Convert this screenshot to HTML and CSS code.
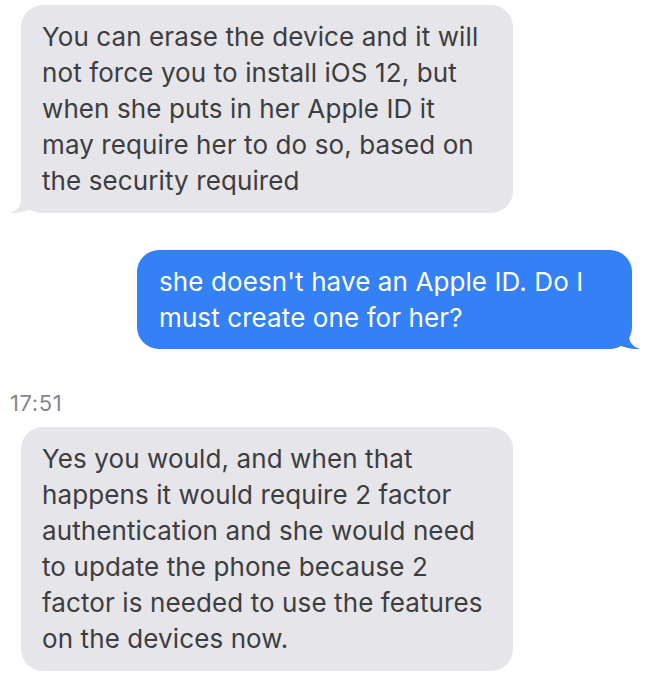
FILE: index.html
```html
<!DOCTYPE html>
<html lang="en">
<head>
  <meta charset="UTF-8">
  <meta name="viewport" content="width=device-width, initial-scale=1.0">
  <title>Messages</title>
  <link rel="stylesheet" href="styles.css">
</head>
<body>
  <div class="thread">
    <div class="row in">
      <div class="bubble grey">
        <svg class="tail tail-left" width="40" height="30" viewBox="0 0 40 30"><path d="M11 0 L11 17 C11 23 7 28 0 30 C7 30.5 14 29 20 26.5 C25 29.5 30 30 40 30 L40 0 Z"/></svg>
        <span class="text">You can erase the device and it will not force you to install iOS 12, but when she puts in her Apple ID it may require her to do so, based on the security required</span>
      </div>
    </div>

    <div class="row out">
      <div class="bubble blue">
        <svg class="tail tail-right" width="40" height="30" viewBox="0 0 40 30"><path d="M29 0 L29 17 C29 23 33 28 40 30 C33 30.5 26 29 20 26.5 C15 29.5 10 30 0 30 L0 0 Z"/></svg>
        <span class="text">she doesn't have an Apple ID. Do I must create one for her?</span>
      </div>
    </div>

    <div class="time">17:51</div>

    <div class="row in">
      <div class="bubble grey">
        <span class="text">Yes you would, and when that happens it would require 2 factor authentication and she would need to update the phone because 2 factor is needed to use the features on the devices now.</span>
      </div>
    </div>
  </div>
</body>
</html>
```

FILE: styles.css
```css
body {
  margin: 0;
  background: #ffffff;
  font-family: Inter, Roboto, "Noto Sans", sans-serif;
}
.thread {
  display: flex;
  flex-direction: column;
  padding: 5px 16px 0 21px;
}
.row {
  display: flex;
}
.row.out {
  justify-content: flex-end;
  margin-top: 37px;
}
.bubble {
  position: relative;
  box-sizing: border-box;
  width: 492px;
  padding: 14px 21px;
  border-radius: 22px;
  font-size: 26px;
  line-height: 36px;
  letter-spacing: 0.1px;
}
.text {
  position: relative;
}
.grey {
  background: #e5e5ea;
  color: #3d3d3f;
}
.blue {
  background: #3480f5;
  color: #ffffff;
  width: 495px;
  padding: 14px 22px 13px 22px;
}
.tail {
  position: absolute;
  bottom: 0;
}
.tail-left {
  left: -11px;
  fill: #e5e5ea;
}
.tail-right {
  right: -8px;
  fill: #3480f5;
}
.time {
  margin: 40px 0 10px -11px;
  font-size: 22px;
  line-height: 28px;
  letter-spacing: 0.6px;
  color: #86868b;
}
```
